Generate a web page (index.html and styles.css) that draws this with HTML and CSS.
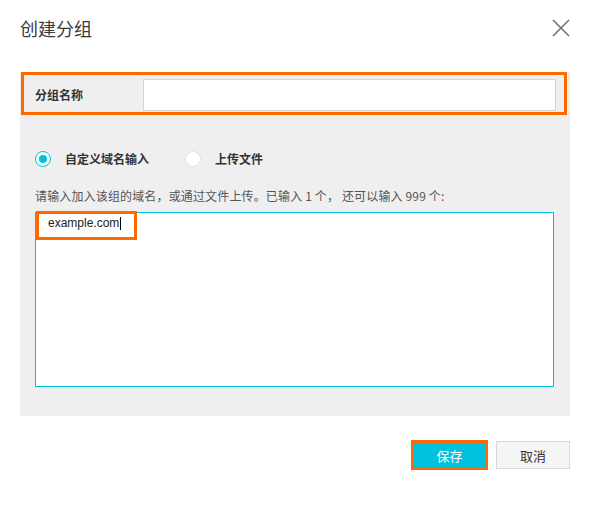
FILE: index.html
```html
<!DOCTYPE html>
<html lang="zh-CN">
<head>
<meta charset="utf-8">
<title>创建分组</title>
<link rel="stylesheet" href="styles.css">
</head>
<body>
<div class="dialog">
  <div class="header">
    <div class="title">创建分组</div>
    <svg class="close" width="18" height="18" viewBox="0 0 18 18" aria-label="关闭">
      <path d="M1 1 L17 17 M17 1 L1 17" stroke="#707070" stroke-width="1.6" fill="none"/>
    </svg>
  </div>
  <div class="panel">
    <div class="name-row">
      <div class="name-label">分组名称</div>
      <div class="name-input"></div>
    </div>
    <div class="radio-row">
      <div class="radio-item">
        <span class="radio checked"><span class="dot"></span></span>
        <span class="radio-text">自定义域名输入</span>
      </div>
      <div class="radio-item">
        <span class="radio"></span>
        <span class="radio-text">上传文件</span>
      </div>
    </div>
    <div class="hint">请输入加入该组的域名，或通过文件上传。已输入 1 个， 还可以输入 999 个:</div>
    <div class="area">
      <div class="area-line">example.com<span class="caret"></span></div>
      <div class="mark"></div>
    </div>
  </div>
  <div class="footer">
    <div class="save-wrap"><div class="btn save">保存</div></div>
    <div class="btn cancel">取消</div>
  </div>
</div>
</body>
</html>
```
FILE: styles.css
```css
* { box-sizing: border-box; }
html, body {
  margin: 0;
  padding: 0;
  background: #ffffff;
}
body {
  font-family: "Noto Sans CJK SC", "Liberation Sans", sans-serif;
  color: #333333;
  font-size: 12px;
}
.dialog {
  width: 590px;
  height: 510px;
  padding: 0 20px;
}
.header {
  height: 72px;
  padding-top: 16px;
  display: flex;
  justify-content: space-between;
  align-items: flex-start;
}
.title {
  font-size: 18px;
  line-height: 25px;
  color: #3a3a3a;
  font-weight: 400;
}
.close {
  display: block;
  margin-top: 3px;
}
.panel {
  background: #efefef;
  padding: 0 16px 29px 15px;
  height: 344px;
}
.name-row {
  margin: 0 -13px 0 -14px;
  height: 43px;
  border: 3px solid #ff6a00;
  display: flex;
  align-items: flex-start;
  padding: 4px 8px 0 11px;
}
.name-label {
  width: 108px;
  font-weight: 700;
  line-height: 32px;
  color: #333333;
}
.name-input {
  width: 413px;
  height: 32px;
  background: #ffffff;
  border: 1px solid #d4d4d4;
}
.radio-row {
  margin-top: 36px;
  height: 16px;
  display: flex;
  align-items: center;
  gap: 36px;
}
.radio-item {
  display: flex;
  align-items: center;
  gap: 14px;
}
.radio {
  width: 16px;
  height: 16px;
  border-radius: 50%;
  background: #ffffff;
  border: 1px solid #e2e2e2;
  display: flex;
  align-items: center;
  justify-content: center;
}
.radio.checked {
  border-color: #00c1de;
}
.dot {
  width: 8px;
  height: 8px;
  border-radius: 50%;
  background: #00c1de;
}
.radio-text {
  font-weight: 700;
  line-height: 16px;
  color: #333333;
}
.hint {
  margin-top: 20px;
  line-height: 18px;
  color: #555555;
  white-space: nowrap;
  letter-spacing: 0.15px;
}
.area {
  position: relative;
  margin-top: 7px;
  width: 519px;
  height: 175px;
  background: #ffffff;
  border: 1px solid #00c1de;
  padding: 2px 12px 0;
}
.area-line {
  font-family: "Liberation Sans", Arial, sans-serif;
  font-size: 12px;
  line-height: 16px;
  color: #222222;
  display: flex;
  align-items: center;
}
.caret {
  display: inline-block;
  width: 1px;
  height: 13px;
  background: #000000;
  margin-left: 1px;
}
.mark {
  position: absolute;
  left: 0;
  top: -2px;
  width: 101px;
  height: 29px;
  border: 3px solid #ff6a00;
}
.footer {
  margin-top: 24px;
  display: flex;
  justify-content: flex-end;
  align-items: center;
  gap: 8px;
}
.save-wrap {
  border: 3px solid #ff6a00;
  width: 77px;
  height: 30px;
}
.btn {
  display: flex;
  align-items: center;
  justify-content: center;
  font-size: 13px;
}
.save {
  width: 100%;
  height: 100%;
  background: #00c1de;
  color: #ffffff;
}
.cancel {
  width: 74px;
  height: 28px;
  background: #f5f5f5;
  border: 1px solid #d9d9d9;
  color: #333333;
}
```
